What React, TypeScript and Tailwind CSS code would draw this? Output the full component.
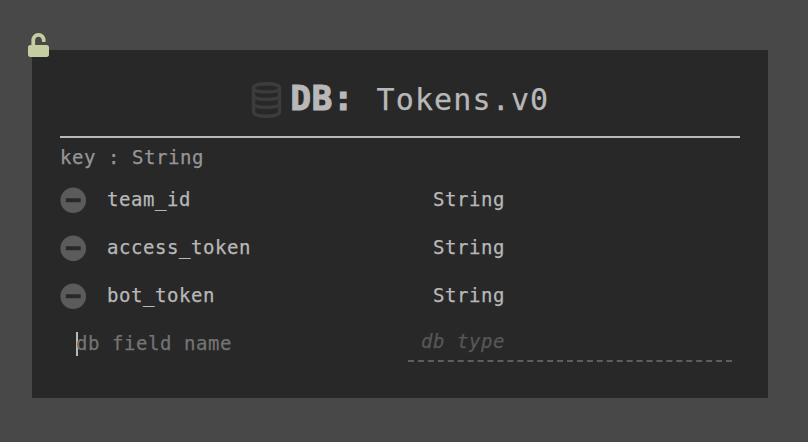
import { FaMinusCircle, FaUnlock } from "react-icons/fa";

const fields = ["team_id", "access_token", "bot_token"];

function DatabaseIcon() {
  return (
    <svg className="mr-px h-9 w-[30.5px] shrink-0" viewBox="0 0 30.5 36" fill="none" stroke="#3c3c3c" strokeWidth="3.4">
      <path d="M2.5 6C2.5 3.2 7 1.8 15.5 1.8S28.5 3.2 28.5 6 24 10 15.5 10 2.5 8.8 2.5 6Z" />
      <path d="M2.5 5.5V29.5C2.5 33 7 34.2 15.5 34.2S28.5 33 28.5 29.5V5.5" />
      <path d="M2.5 13C2.5 16 7 17.4 15.5 17.4S28.5 16 28.5 13M2.5 21C2.5 24 7 25.4 15.5 25.4S28.5 24 28.5 21" />
    </svg>
  );
}

export default function App() {
  return (
    <main className="h-[442px] w-[808px] overflow-hidden bg-[#484848] px-8 pt-[50px] font-['DejaVu_Sans_Mono',monospace] text-[19px] tracking-[0.56px] text-[#b8b8b8] [-webkit-text-stroke:0.25px_currentColor]">
      <section className="relative h-[348px] w-[736px] bg-[#282828] px-7">
        <FaUnlock className="absolute -left-1 -top-[17px] h-6 w-[21px] text-[#c4cea0]" />
        <header className="flex h-[88px] border-b-2 border-[#b8b8b8] pl-[191px] pt-8">
          <DatabaseIcon />
          <h1 className="ml-[8px] -mt-[5px] flex h-9 items-baseline whitespace-pre leading-9">
            <span className="w-[86px] text-[34px] font-bold leading-[42px] tracking-[0.8px] [-webkit-text-stroke:1.2px_currentColor]">DB:</span>
            <span className="text-[30px] tracking-[1.14px]">Tokens.v0</span>
          </h1>
        </header>
        <p className="h-[37px] pt-[7px] leading-6 text-[#969696]">key : String</p>
        <ul>
          {fields.map((field) => (
            <li key={field} className="flex h-12 items-start">
              <FaMinusCircle className="mt-3 size-[26.5px] shrink-0 text-[#5b5b5b]" />
              <span className="ml-[20.5px] w-[326px] pt-3 leading-6">{field}</span>
              <span className="pt-3 leading-6">String</span>
            </li>
          ))}
        </ul>
        <div className="flex pl-4">
          <div className="mt-[13px] h-6 w-[332px] border-l-2 border-[#b8b8b8] leading-[22px] text-[#747474]">
            <span className="-ml-0.5">db field name</span>
          </div>
          <div className="h-[43px] w-[324px]">
            <p className="h-[41px] pl-[13px] pt-[10px] italic leading-6 text-[#575757]">db type</p>
            <svg className="h-0.5 w-[324px]" viewBox="0 0 324 2">
              <path d="M0 1H324" stroke="#5e5e5e" strokeWidth="2" strokeDasharray="6 3.9375" />
            </svg>
          </div>
        </div>
      </section>
    </main>
  );
}
